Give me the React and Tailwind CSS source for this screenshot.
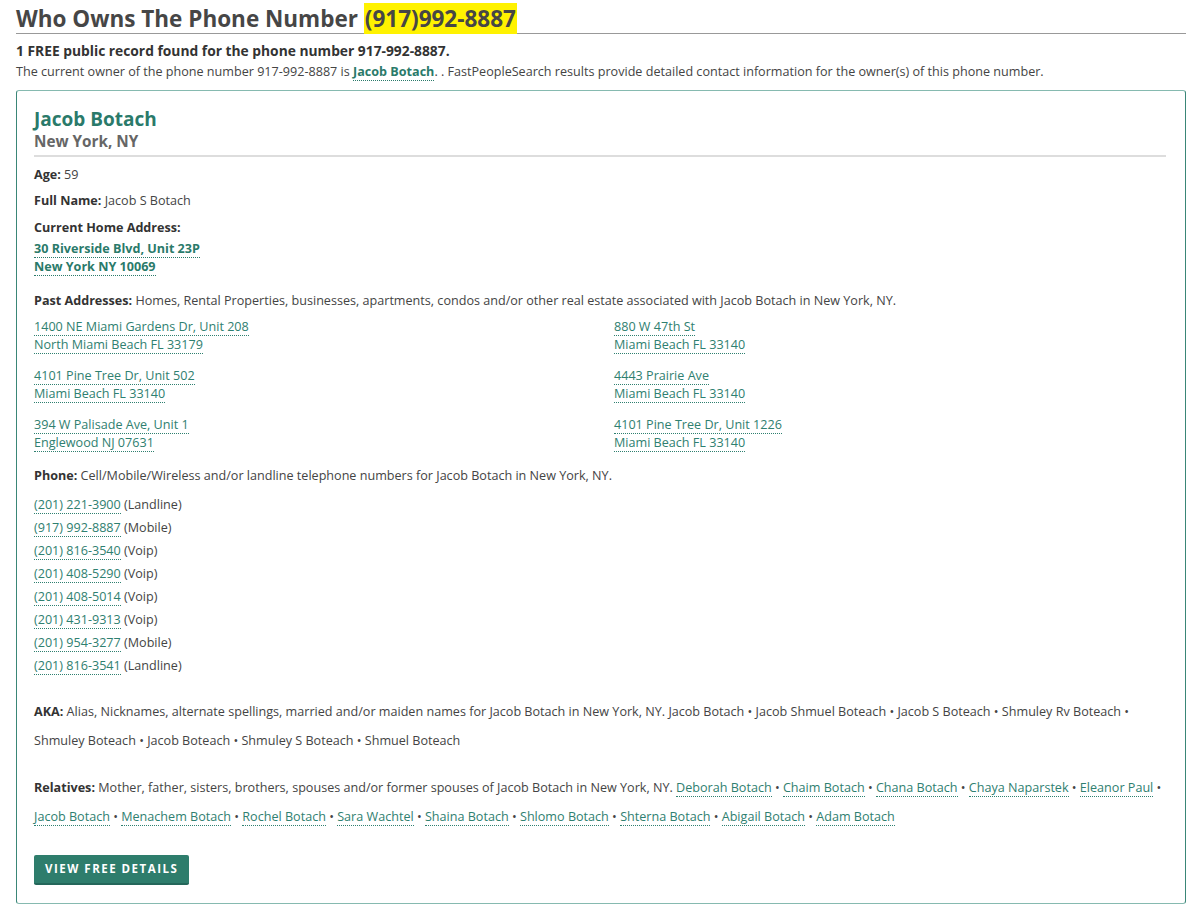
import React from 'react';

const pastAddresses = [
  ['1400 NE Miami Gardens Dr, Unit 208', 'North Miami Beach FL 33179'],
  ['880 W 47th St', 'Miami Beach FL 33140'],
  ['4101 Pine Tree Dr, Unit 502', 'Miami Beach FL 33140'],
  ['4443 Prairie Ave', 'Miami Beach FL 33140'],
  ['394 W Palisade Ave, Unit 1', 'Englewood NJ 07631'],
  ['4101 Pine Tree Dr, Unit 1226', 'Miami Beach FL 33140'],
];

const phones = [
  ['(201) 221-3900', 'Landline'],
  ['(917) 992-8887', 'Mobile'],
  ['(201) 816-3540', 'Voip'],
  ['(201) 408-5290', 'Voip'],
  ['(201) 408-5014', 'Voip'],
  ['(201) 431-9313', 'Voip'],
  ['(201) 954-3277', 'Mobile'],
  ['(201) 816-3541', 'Landline'],
];

const akas = [
  'Jacob Botach',
  'Jacob Shmuel Boteach',
  'Jacob S Boteach',
  'Shmuley Rv Boteach',
  'Shmuley Boteach',
  'Jacob Boteach',
  'Shmuley S Boteach',
  'Shmuel Boteach',
];

const relatives = [
  'Deborah Botach',
  'Chaim Botach',
  'Chana Botach',
  'Chaya Naparstek',
  'Eleanor Paul',
  'Jacob Botach',
  'Menachem Botach',
  'Rochel Botach',
  'Sara Wachtel',
  'Shaina Botach',
  'Shlomo Botach',
  'Shterna Botach',
  'Abigail Botach',
  'Adam Botach',
];

const Link = ({ children, bold }) => (
  <a
    href="#"
    className={
      bold
        ? 'text-[#2a7a6a] font-bold border-b border-dotted border-[#2a7a6a] no-underline'
        : 'text-[#2f8070] border-b border-dotted border-[#2f8070] no-underline'
    }
  >
    {children}
  </a>
);

export default function App() {
  return (
    <div
      className="bg-white text-[#444] pl-4 pr-[14px] pt-[5px] pb-2 text-[12.6px] leading-[17px]"
      style={{ fontFamily: '"Open Sans", "Liberation Sans", sans-serif' }}
    >
      <h1 className="text-[22.5px] leading-[28px] font-bold text-[#464646] border-b border-[#999]">
        Who Owns The Phone Number <span className="bg-[#fff200] px-[1px]">(917)992-8887</span>
      </h1>
      <h2 className="mt-[8px] text-[13.8px] leading-[18px] font-bold text-[#333]">
        1 FREE public record found for the phone number 917-992-8887.
      </h2>
      <p className="mt-[3px]">
        The current owner of the phone number 917-992-8887 is <Link bold>Jacob Botach</Link>. . FastPeopleSearch results provide detailed contact information for the owner(s) of this phone number.
      </p>

      <div className="mt-[10px] rounded-[3px] border border-y-[#86bab0] border-x-[#3a8677] pl-[17px] pr-[19px] pt-[16px] pb-[18px]">
        <h3 className="text-[19px] leading-[24px] font-bold text-[#2a7a6a]">Jacob Botach</h3>
        <div className="text-[15.3px] leading-[20px] font-bold text-[#666]">New York, NY</div>
        <div className="mt-[4px] h-[2px] bg-[#dddddd]" />

        <p className="mt-[9px]"><b className="text-[#333]">Age:</b> 59</p>
        <p className="mt-[9px]"><b className="text-[#333]">Full Name:</b> Jacob S Botach</p>
        <p className="mt-[10px]"><b className="text-[#333]">Current Home Address:</b></p>
        <div className="mt-[4px] flex flex-col items-start">
          <Link bold>30 Riverside Blvd, Unit 23P</Link>
          <Link bold>New York NY 10069</Link>
        </div>

        <p className="mt-[16px]">
          <b className="text-[#333]">Past Addresses:</b> Homes, Rental Properties, businesses, apartments, condos and/or other real estate associated with Jacob Botach in New York, NY.
        </p>
        <div className="mt-[9px] grid grid-cols-2 gap-x-[28px] gap-y-[13px]">
          {pastAddresses.map(([a, b], i) => (
            <div key={i} className="flex flex-col items-start">
              <Link>{a}</Link>
              <Link>{b}</Link>
            </div>
          ))}
        </div>

        <p className="mt-[15px]">
          <b className="text-[#333]">Phone:</b> Cell/Mobile/Wireless and/or landline telephone numbers for Jacob Botach in New York, NY.
        </p>
        <div className="mt-[12px] flex flex-col gap-[5px]">
          {phones.map(([n, t], i) => (
            <div key={i} className="leading-[18px]">
              <Link>{n}</Link> ({t})
            </div>
          ))}
        </div>

        <p className="mt-[22px] leading-[29px]">
          <b className="text-[#333]">AKA:</b> Alias, Nicknames, alternate spellings, married and/or maiden names for Jacob Botach in New York, NY.{' '}
          {akas.map((n, i) => (
            <span key={i}>
              {n}
              {i < akas.length - 1 ? ' \u2022 ' : ''}
            </span>
          ))}
        </p>

        <p className="mt-[18px] leading-[29px]">
          <b className="text-[#333]">Relatives:</b> Mother, father, sisters, brothers, spouses and/or former spouses of Jacob Botach in New York, NY.{' '}
          {relatives.map((n, i) => (
            <span key={i}>
              <Link>{n}</Link>
              {i < relatives.length - 1 ? ' \u2022 ' : ''}
            </span>
          ))}
        </p>

        <button className="mt-[24px] bg-[#2e7d6c] text-white text-[11.5px] leading-[16px] font-bold uppercase tracking-[1.5px] px-[11px] py-[6px] rounded-[2px] border-b-2 border-[#24675a]">
          View Free Details
        </button>
      </div>
    </div>
  );
}
